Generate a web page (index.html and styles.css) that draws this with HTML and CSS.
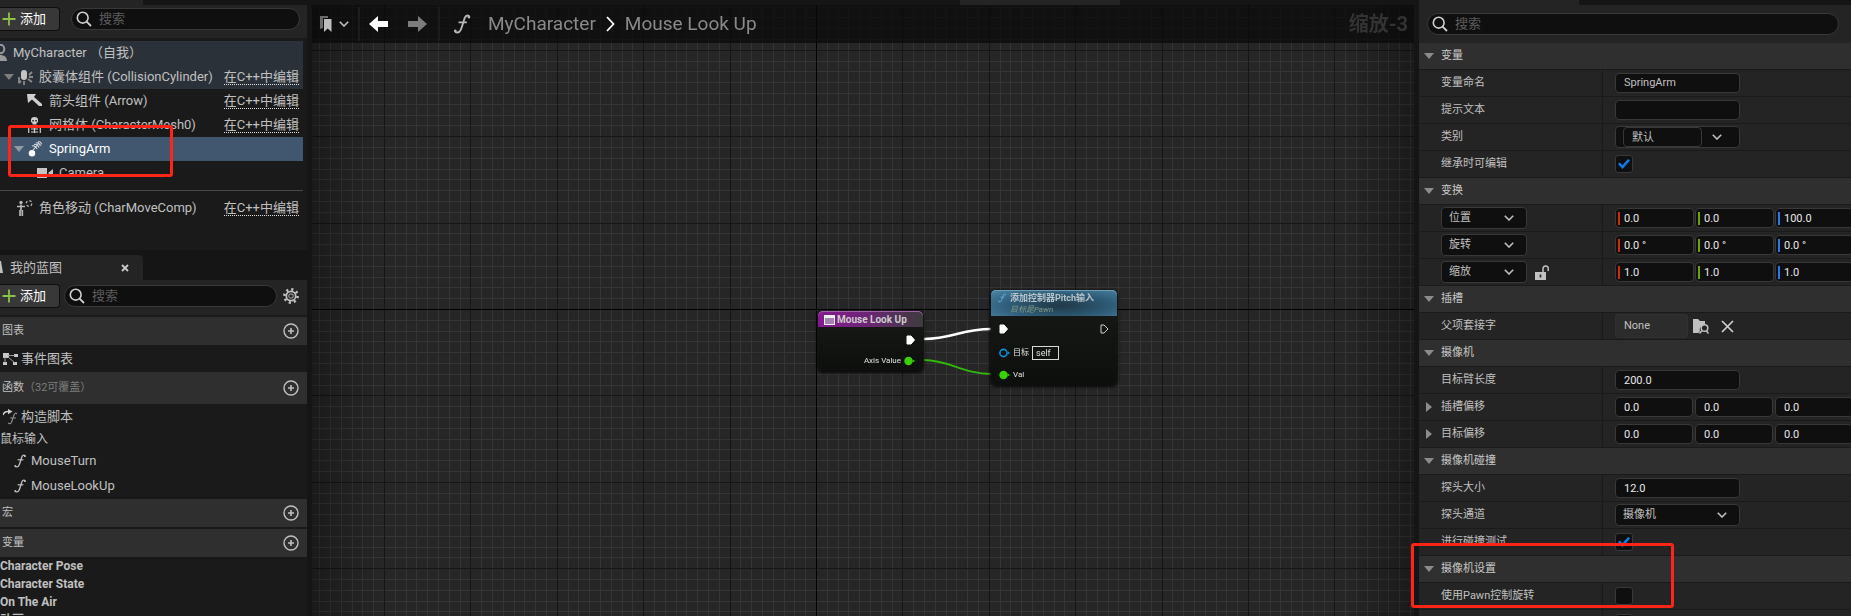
FILE: index.html
```html
<!DOCTYPE html>
<html lang="zh-CN">
<head>
<meta charset="utf-8">
<title>MyCharacter</title>
<link rel="stylesheet" href="styles.css">
</head>
<body>
<svg class="defs" width="0" height="0" aria-hidden="true">
  <symbol id="i-search" viewBox="0 0 16 16"><circle cx="6.7" cy="6.7" r="5.4" fill="none" stroke="currentColor" stroke-width="1.6"/><path d="M10.6 10.6 15 15" stroke="currentColor" stroke-width="1.8"/></symbol>
  <symbol id="i-plus" viewBox="0 0 14 14"><path d="M7 0.5v13M0.500 7h13" stroke="#8bc24a" stroke-width="1.8"/></symbol>
  <symbol id="i-add" viewBox="0 0 16 16"><circle cx="8" cy="8" r="7" fill="none" stroke="currentColor" stroke-width="1.4"/><path d="M8 5v6M5 8h6" stroke="currentColor" stroke-width="1.6"/></symbol>
  <symbol id="i-down" viewBox="0 0 10 6"><path d="M0 0h10L5 6z" fill="currentColor"/></symbol>
  <symbol id="i-right" viewBox="0 0 6 10"><path d="M0 0v10L6 5z" fill="currentColor"/></symbol>
  <symbol id="i-chev" viewBox="0 0 10 6"><path d="M.8.8 5 5 9.200.8" fill="none" stroke="currentColor" stroke-width="1.6"/></symbol>
  <symbol id="i-fn" viewBox="0 0 12 14"><path d="M11.300 2.300C11 .6 8.900.6 8 2.600 7 5 6.200 9 5 11.300 4 13.400 1.600 13.400.9 11.800" fill="none" stroke="currentColor" stroke-width="1.300"/><path d="M3.600 5.800h5.800" stroke="currentColor" stroke-width="1.200"/><circle cx="10.900" cy="2.200" r=".9" fill="currentColor"/><circle cx="1.300" cy="11.800" r=".9" fill="currentColor"/></symbol>
</svg>

<main class="editor">
  <aside class="left">
    <section class="components">
      <div class="strip"><span class="strip-tab"></span></div>
      <div class="toolbar">
        <button class="add"><svg width="14" height="14"><use href="#i-plus"/></svg>添加</button>
        <label class="search search-wide"><svg width="16" height="16"><use href="#i-search"/></svg><input type="text" placeholder="搜索" aria-label="搜索组件"></label>
      </div>
      <ul class="tree">
        <li class="trow root"><svg width="8" height="18" viewBox="0 0 8 18"><circle cx="0" cy="5" r="4.300" fill="none" stroke="#9a9a9a" stroke-width="2"/><path d="M0 11c4 0 7 2 7 6H0z" fill="#9a9a9a"/></svg><span>MyCharacter （自我）</span></li>
        <li class="trow lvl1 tinted"><svg class="dim" width="10" height="6"><use href="#i-down"/></svg>
          <svg width="16" height="16" viewBox="0 0 16 16"><rect x="3" y="1" width="6" height="10" rx="3" fill="#c4c4c4"/><path d="M1 8v4l-1.500 2M11 6l3-3M11 8h4M10 10l4 3M6 12v4M3 12l-2 2" stroke="#8a8a8a" stroke-width="1.800" fill="none"/></svg>
          <span>胶囊体组件 (CollisionCylinder)</span><a href="#">在C++中编辑</a></li>
        <li class="trow lvl2"><svg width="16" height="14" viewBox="0 0 16 14"><path d="M0 0h9L7 3l8 7v2l-3 0-7-6.500L1 9z" fill="#cfcfcf"/></svg><span>箭头组件 (Arrow)</span><a href="#">在C++中编辑</a></li>
        <li class="trow lvl2"><svg width="16" height="16" viewBox="0 0 16 16"><path d="M4 3Q4 0 7.500 0T11 3v2L9.500 6v1.500h-4V6L4 5z" fill="#cfcfcf"/><path d="M5.300 3h1.500v1.500H5.300zM8.300 3h1.500v1.500H8.300z" fill="#1a1a1a"/><path d="M2 9.500h11M4 12h7M4 15h7M7.500 8v8M1.700 9v7M13.300 9v7" stroke="#cfcfcf" stroke-width="1.200"/></svg><span>网格体 (CharacterMesh0)</span><a href="#">在C++中编辑</a></li>
        <li class="trow lvl1b selected"><svg class="dim" width="10" height="6"><use href="#i-down"/></svg>
          <svg width="16" height="16" viewBox="0 0 16 16"><circle cx="4" cy="12.300" r="3.200" fill="#fff"/><path d="M4 5q3-1 5 3M6 3.500q3-1 5 3M8 2q3-1 4.500 3M10 .8q3-.5 3.500 2.500M5 9l6-7" fill="none" stroke="#d8dde2" stroke-width="1.100"/></svg><span>SpringArm</span></li>
        <li class="trow lvl3"><svg width="16" height="10" viewBox="0 0 16 10"><path d="M0 0h10v10H0zM11 5l5-4v8z" fill="#c4c4c4"/></svg><span>Camera</span></li>
        <li class="tsep"></li>
        <li class="trow lvl1c"><svg width="16" height="16" viewBox="0 0 16 16"><circle cx="4" cy="2.500" r="1.700" fill="#b8b8b8"/><path d="M4 4.500v6M0 6.500h8M3 10v6M5.300 10v6" stroke="#b8b8b8" stroke-width="1.700"/><circle cx="12" cy="3.500" r="2.800" fill="none" stroke="#b8b8b8" stroke-width="1.300" stroke-dasharray="2.400 2"/></svg><span>角色移动 (CharMoveComp)</span><a href="#">在C++中编辑</a></li>
      </ul>
    </section>

    <section class="blueprint">
      <div class="tabs"><div class="tab"><svg width="4" height="14" viewBox="0 0 4 14"><path d="M0 0h1l2 12H0z" fill="#c0c0c0"/></svg><span>我的蓝图</span>
        <button class="close" aria-label="关闭"><svg width="8" height="8" viewBox="0 0 8 8"><path d="M1 1l6 6M7 1 1 7" stroke="#c8c8c8" stroke-width="1.900"/></svg></button></div></div>
      <div class="toolbar">
        <button class="add"><svg width="14" height="14"><use href="#i-plus"/></svg>添加</button>
        <label class="search search-near"><svg width="16" height="16"><use href="#i-search"/></svg><input type="text" placeholder="搜索" aria-label="搜索蓝图"></label>
        <button class="icon" aria-label="设置"><svg width="16" height="16" viewBox="0 0 16 16"><circle cx="8" cy="8" r="6.600" fill="none" stroke="#c0c0c0" stroke-width="2.600" stroke-dasharray="2.200 2.984"/><circle cx="8" cy="8" r="4.700" fill="none" stroke="#c0c0c0" stroke-width="1.700"/><circle cx="8" cy="8" r="2.200" fill="none" stroke="#909090" stroke-width="1.200"/></svg></button>
      </div>
      <div class="cat"><span>图表</span><button class="icon" aria-label="添加图表"><svg width="16" height="16"><use href="#i-add"/></svg></button></div>
      <div class="item"><svg width="15" height="14" viewBox="0 0 15 14"><path d="M0 1h6v5H0zM11 2h4v3h-4zM0 10h4v3H0zM10 10h4v3h-4z" fill="#c8c8c8"/><path d="M5 3.500h7M2 5v6M5 5l7 6" stroke="#a0a0a0" fill="none"/></svg><span>事件图表</span></div>
      <div class="cat cat-tall"><span>函数<em>（32可覆盖）</em></span><button class="icon" aria-label="添加函数"><svg width="16" height="16"><use href="#i-add"/></svg></button></div>
      <div class="item script"><svg width="15" height="16" viewBox="0 0 15 16"><path d="M0 6Q1 2 6 2.500" fill="none" stroke="#d0d0d0" stroke-width="1.600"/><path d="M5 0l4.500 2.500L5 5.200z" fill="#d0d0d0"/><path d="M14 5q-2-2-3 1l-2 6q-1 4-4 2M7 9h6" fill="none" stroke="#8a8a8a" stroke-width="1.200"/></svg><span>构造脚本</span></div>
      <div class="group">鼠标输入</div>
      <div class="item fn"><svg width="12" height="14"><use href="#i-fn"/></svg><span>MouseTurn</span></div>
      <div class="item fn"><svg width="12" height="14"><use href="#i-fn"/></svg><span>MouseLookUp</span></div>
      <div class="cat"><span>宏</span><button class="icon" aria-label="添加宏"><svg width="16" height="16"><use href="#i-add"/></svg></button></div>
      <div class="cat cat-next"><span>变量</span><button class="icon" aria-label="添加变量"><svg width="16" height="16"><use href="#i-add"/></svg></button></div>
      <div class="vars"><div>Character Pose</div><div>Character State</div><div>On The Air</div><div>动画</div></div>
    </section>
  </aside>

  <section class="graph">
    <div class="strip graph-strip"><span class="strip-mid"></span></div>
    <div class="canvas">
      <canvas class="grid"></canvas>
      <header class="crumbs">
        <button class="icon marks" aria-label="书签"><svg width="12" height="17" viewBox="0 0 12 17"><path d="M0 0h8v2H3v10l-3 1z" fill="#6c6c6c"/><path d="M4 3h7.500v13L7.700 12.500 4 16z" fill="#bdbdbd"/></svg><svg width="10" height="6"><use href="#i-chev"/></svg></button>
        <i class="bar"></i>
        <button class="icon" aria-label="后退"><svg width="20" height="16" viewBox="0 0 20 16"><path d="M0 8 9 0v5h10v6H9v5z" fill="#fff"/></svg></button>
        <button class="icon forward" aria-label="前进"><svg width="20" height="16" viewBox="0 0 20 16"><path d="M19 8 10 0v5H0v6h10v5z" fill="#7d7d7d"/></svg></button>
        <i class="bar bar-two"></i>
        <svg class="fn-big" width="18" height="20" viewBox="0 0 12 14"><use href="#i-fn"/></svg>
        <nav><a href="#">MyCharacter</a><svg width="9" height="16" viewBox="0 0 9 16"><path d="M1 1l6.500 7L1 15" fill="none" stroke="#fff" stroke-width="1.800"/></svg><a href="#">Mouse Look Up</a></nav>
        <span class="zoom">缩放-3</span>
      </header>
      <svg class="wires" width="700" height="500" viewBox="0 0 700 500"><path d="M603 334h9" stroke="#666" stroke-width="1.500"/><path d="M603 355h9" stroke="#266b12" stroke-width="1.500"/><path d="M612 334C640 334 650 324 679 324" fill="none" stroke="#fff" stroke-width="2.600"/><path d="M612 355C638 355 650 369 680 369" fill="none" stroke="#30b80c" stroke-width="1.800"/></svg>
      <article class="node event">
        <h3><svg width="11" height="10" viewBox="0 0 11 10"><path d="M0 0h11v10H0z" fill="#eee"/><path d="M1 3h9v6H1z" fill="#a583b0"/></svg>Mouse Look Up</h3>
        <div class="pin out"><svg width="9" height="10" viewBox="0 0 9 10"><path d="M1 1h4l3.500 4L5 9H1z" fill="#fff" stroke="#fff"/></svg></div>
        <div class="pin out value"><span>Axis Value</span><svg width="11" height="10" viewBox="0 0 11 10"><circle cx="4.500" cy="5" r="4.200" fill="#38d200"/><path d="M8.500 3.500 11 5 8.500 6.500z" fill="#38d200"/></svg></div>
      </article>
      <article class="node call">
        <h3><svg width="8" height="10" viewBox="0 0 12 14"><use href="#i-fn"/></svg><span>添加控制器Pitch输入<small>目标是Pawn</small></span></h3>
        <div class="pin"><svg width="9" height="10" viewBox="0 0 9 10"><path d="M1 1h4l3.500 4L5 9H1z" fill="#fff" stroke="#fff"/></svg><svg width="9" height="10" viewBox="0 0 9 10"><path d="M1 1h3l4 4-4 4H1z" fill="none" stroke="#d0d0d0"/></svg></div>
        <div class="pin"><svg width="11" height="10" viewBox="0 0 11 10"><circle cx="4.500" cy="5" r="3.600" fill="none" stroke="#0a8fd8" stroke-width="1.600"/><path d="M9 3.500 11 5 9 6.500z" fill="#0a8fd8"/></svg><label for="self">目标</label><input id="self" type="text" value="self"></div>
        <div class="pin"><svg width="11" height="10" viewBox="0 0 11 10"><circle cx="4.500" cy="5" r="4.200" fill="#38d200"/><path d="M8.500 3.500 11 5 8.500 6.500z" fill="#38d200"/></svg><span>Val</span></div>
      </article>
    </div>
  </section>

  <aside class="details">
    <div class="strip"><span class="strip-tab"></span></div>
    <div class="dsearch"><label class="search"><svg width="16" height="16"><use href="#i-search"/></svg><input type="text" placeholder="搜索" aria-label="搜索细节"></label></div>

    <h2><svg width="10" height="6"><use href="#i-down"/></svg>变量</h2>
    <div class="prop"><label for="vname">变量命名</label><div><input id="vname" class="field name" type="text" value="SpringArm"></div></div>
    <div class="prop"><label for="tip">提示文本</label><div><input id="tip" class="field" type="text"></div></div>
    <div class="prop"><label for="cate">类别</label><div><div class="combo"><input id="cate" type="text" value="默认"><button class="icon" aria-label="选择类别"><svg width="10" height="6"><use href="#i-chev"/></svg></button></div></div></div>
    <div class="prop"><label for="inst">继承时可编辑</label><div><input id="inst" type="checkbox" checked></div></div>

    <h2><svg width="10" height="6"><use href="#i-down"/></svg>变换</h2>
    <div class="prop"><div class="key"><span class="sel"><select aria-label="位置"><option>位置</option></select><svg width="10" height="6"><use href="#i-chev"/></svg></span></div><div class="vec"><input class="r" aria-label="X" value="0.0"><input class="g" aria-label="Y" value="0.0"><input class="b" aria-label="Z" value="100.0"></div></div>
    <div class="prop"><div class="key"><span class="sel"><select aria-label="旋转"><option>旋转</option></select><svg width="10" height="6"><use href="#i-chev"/></svg></span></div><div class="vec"><input class="r" aria-label="X" value="0.0 °"><input class="g" aria-label="Y" value="0.0 °"><input class="b" aria-label="Z" value="0.0 °"></div></div>
    <div class="prop"><div class="key"><span class="sel"><select aria-label="缩放"><option>缩放</option></select><svg width="10" height="6"><use href="#i-chev"/></svg></span><button class="icon" aria-label="锁定比例"><svg width="14" height="15" viewBox="0 0 14 15"><path d="M0 7h11v8H0z" fill="#c0c0c0"/><path d="M8 7V4q0-3 2.700-3T13.200 4v2" fill="none" stroke="#c0c0c0" stroke-width="1.500"/><path d="M4.700 9.500h1.600v3H4.700z" fill="#222"/></svg></button></div><div class="vec"><input class="r" aria-label="X" value="1.0"><input class="g" aria-label="Y" value="1.0"><input class="b" aria-label="Z" value="1.0"></div></div>

    <h2><svg width="10" height="6"><use href="#i-down"/></svg>插槽</h2>
    <div class="prop"><label for="sock">父项套接字</label><div><input id="sock" class="socket" type="text" value="None" readonly>
      <button class="icon browse" aria-label="浏览"><svg width="17" height="15" viewBox="0 0 17 15"><path d="M0 0h5l2 2h5v3.500a5 5 0 0 0-5 6.500l-1.500 2H0z" fill="#c0c0c0"/><circle cx="11.500" cy="9" r="3.300" fill="none" stroke="#c0c0c0" stroke-width="1.500"/><path d="M9 11.500 6.500 14.500M13.500 12l2 2.500" stroke="#c0c0c0" stroke-width="1.500"/></svg></button>
      <button class="icon clear" aria-label="清除"><svg width="13" height="13" viewBox="0 0 13 13"><path d="M1 1l11 11M12 1 1 12" stroke="#cfcfcf" stroke-width="1.700"/></svg></button></div></div>

    <h2><svg width="10" height="6"><use href="#i-down"/></svg>摄像机</h2>
    <div class="prop"><label for="arm">目标臂长度</label><div><input id="arm" class="field" type="text" value="200.0"></div></div>
    <div class="prop"><div class="key fold"><svg width="6" height="10"><use href="#i-right"/></svg>插槽偏移</div><div class="vec plain"><input aria-label="X" value="0.0"><input aria-label="Y" value="0.0"><input aria-label="Z" value="0.0"></div></div>
    <div class="prop"><div class="key fold"><svg width="6" height="10"><use href="#i-right"/></svg>目标偏移</div><div class="vec plain"><input aria-label="X" value="0.0"><input aria-label="Y" value="0.0"><input aria-label="Z" value="0.0"></div></div>

    <h2><svg width="10" height="6"><use href="#i-down"/></svg>摄像机碰撞</h2>
    <div class="prop"><label for="probe">探头大小</label><div><input id="probe" class="field" type="text" value="12.0"></div></div>
    <div class="prop"><label for="chan">探头通道</label><div><span class="sel sel-wide"><select id="chan"><option>摄像机</option></select><svg width="10" height="6"><use href="#i-chev"/></svg></span></div></div>
    <div class="prop"><label for="test">进行碰撞测试</label><div><input id="test" type="checkbox" checked></div></div>

    <h2><svg width="10" height="6"><use href="#i-down"/></svg>摄像机设置</h2>
    <div class="prop"><label for="pawn">使用Pawn控制旋转</label><div><input id="pawn" type="checkbox"></div></div>
    <div class="prop"><label></label><div><input type="checkbox" aria-label="继承Pitch"></div></div>
  </aside>
</main>
<div class="callout callout-spring"></div>
<div class="callout callout-camera"></div>
<script src="grid.js"></script>
</body>
</html>
```

FILE: styles.css
```css
* { box-sizing: border-box; }
body { margin: 0; background: #151515; color: #c0c0c0; font: 13px/16px Roboto, "Noto Sans CJK SC", sans-serif; overflow: hidden; }
button, input, select { font: inherit; color: inherit; margin: 0; padding: 0; border: 0; background: none; appearance: none; outline: 0; }
ul { list-style: none; margin: 0; padding: 0; }
svg { display: block; flex: none; }
.defs { position: absolute; }
.icon { display: flex; align-items: center; color: #c0c0c0; }
.editor { display: grid; grid-template-columns: 307px 1fr 432px; gap: 5px; height: 100vh; }
.left, .graph, .details { min-width: 0; overflow: hidden; }
.strip { height: 5px; background: #151515; display: flex; }
.strip-tab { width: 143px; background: #242424; }

/* left column */
.left { background: #1a1a1a; display: flex; flex-direction: column; }
.components { height: 250px; flex: none; }
.blueprint { flex: none; }
.toolbar { display: flex; align-items: center; height: 35px; background: #242424; border-bottom: 2px solid #1a1a1a; padding: 0 7px 5px 0; }
.add { display: flex; align-items: center; gap: 4px; width: 60px; height: 24px; padding-left: 2px; background: #383838; border: 1px solid #0f0f0f; border-left: 0; border-radius: 0 4px 4px 0; color: #fff; }
.search { display: flex; align-items: center; gap: 7px; height: 22px; flex: 1; padding-left: 4px; border: 1px solid #383838; border-radius: 11px; background: #0f0f0f; color: #d0d0d0; }
.search input { width: 100%; min-width: 0; }
.search input::placeholder { color: #5c5c5c; opacity: 1; }
.search-wide { margin-left: 11px; }
.search-near { margin: 0 6px 0 4px; }
.tree { padding-top: 1px; margin-right: 4px; }
.trow { display: flex; align-items: center; height: 24px; white-space: nowrap; }
.trow a { margin-left: auto; margin-right: 4px; color: inherit; text-decoration: none; line-height: 15px; border-bottom: 1px dotted #e0e0e0; }
.root, .tinted { background: #2b3139; }
.root span { margin-left: 5px; }
.dim { color: #7d7d7d; }
.selected .dim { color: #8f9aa5; }
.lvl1 { padding-left: 4px; gap: 4px; }
.lvl1 span { margin-left: 1px; }
.lvl2 { padding-left: 27px; gap: 6px; }
.lvl1b { padding-left: 14px; gap: 4px; }
.lvl1b span { margin-left: 1px; }
.lvl3 { padding-left: 37px; gap: 6px; }
.lvl1c { padding-left: 17px; gap: 6px; }
.selected { background: #40576f; color: #fff; }
.tsep { height: 1px; margin: 5px 0; background: #4a4a4a; }
.tabs { height: 30px; padding-top: 5px; background: #151515; }
.tab { display: flex; align-items: center; width: 143px; height: 25px; background: #242424; border-radius: 0 4px 0 0; }
.tab span { margin-left: 6px; }
.close { margin-left: auto; margin-right: 14px; }
.blueprint .toolbar { height: 37px; padding: 0 8px 3px 0; }
.cat { display: flex; align-items: center; justify-content: space-between; height: 28px; padding: 0 8px 0 2px; background: #2f2f2f; font-size: 11px; }
.cat-tall { height: 32px; }
.cat-next { margin-top: 2px; }
.cat em { font-style: normal; color: #7c7c7c; }
.item { display: flex; align-items: center; gap: 3px; height: 27px; padding-left: 3px; }
.script { height: 26px; }
.group { height: 18px; line-height: 18px; font-size: 12px; }
.fn { height: 25px; padding-left: 14px; gap: 5px; }
.script + .group + .fn + .fn { margin-bottom: 1px; }
.vars { font-weight: 700; font-size: 12px; line-height: 18px; height: 72px; }

/* graph */
.graph { display: flex; flex-direction: column; }
.graph-strip { justify-content: center; }
.strip-mid { width: 160px; margin-left: 354px; background: #242424; }
.canvas { position: relative; flex: 1; background: #262626; overflow: hidden; }
.grid { position: absolute; inset: 0; width: 100%; height: 100%; }
.crumbs { position: relative; display: flex; align-items: center; height: 38px; padding: 0 6px 0 8px; background: rgba(8, 8, 8, .72); color: #8a8a8a; font-size: 19px; line-height: 24px; }
.marks { gap: 7px; width: 38px; }
.bar { width: 2px; height: 34px; background: #1c1c1c; margin-right: 9px; }
.forward { margin-left: 19px; }
.bar-two { margin-left: 10px; margin-right: 13px; }
.fn-big { color: #b8b8b8; }
.crumbs nav { display: flex; align-items: center; gap: 10px; margin-left: 17px; }
.crumbs a { color: inherit; text-decoration: none; }
.zoom { margin-left: auto; font-size: 20px; font-weight: 700; color: #333; }
.wires { position: absolute; left: 0; top: 0; }
.node { position: absolute; border-radius: 5px; background: linear-gradient(#171a17, #0c0f0c); box-shadow: 0 1px 3px 1px #0a0a0a; color: #e0e0e0; font-size: 8px; line-height: 10px; }
.node h3 { margin: 0; display: flex; gap: 3px; border-radius: 5px 5px 0 0; font-weight: 700; line-height: 11px; color: #ccc; }
.event { left: 506px; top: 306px; width: 105px; height: 60px; }
.event h3 { height: 16px; align-items: center; padding: 1px 0 0 6px; font-size: 10px; gap: 2px; background: linear-gradient(90deg, #85198f, #6e2478 45%, #3c3c3c); box-shadow: inset 0 1px #a060a8; }
.call { left: 679px; top: 285px; width: 126px; height: 95px; }
.call h3 { height: 26px; padding: 3px 0 0 7px; font-size: 9px; gap: 4px; background: radial-gradient(ellipse at 55% 60%, #203845, #2d5a75 50%, #4d86a8); box-shadow: inset 0 1px #6e9db8; color: #b8c4cc; }
.call h3 svg { color: #5fb4e8; }
.call small { display: block; font-size: 8px; font-style: italic; font-weight: 400; color: #7f9683; }
.pin { display: flex; align-items: center; }
.out { justify-content: flex-end; padding: 8px 8px 0 0; }
.value { padding: 11px 8px 0 0; gap: 3px; }
.call .pin { height: 22px; padding: 0 8px; }
.call .pin:nth-of-type(1) { justify-content: space-between; height: 26px; }
.call .pin span, .call .pin label { margin-left: 3px; }
.call .pin input { width: 27px; height: 14px; margin-left: 3px; padding-left: 3px; border: 1px solid #d8d8d8; font-size: 9px; }

/* details */
.details { background: #242424; font-size: 11px; }
.details .strip-tab { width: 160px; }
.dsearch { display: flex; height: 38px; padding: 8px 12px 0 8px; font-size: 13px; }
.details h2 { display: flex; align-items: center; gap: 7px; margin: 0; height: 27px; padding-left: 5px; background: #2f2f2f; border-bottom: 1px solid #1a1a1a; font-size: 11px; font-weight: 400; color: #c8c8c8; }
.details h2 svg { color: #8c8c8c; }
.prop { display: grid; grid-template-columns: 184px 1fr; height: 27px; border-bottom: 1px solid #1a1a1a; }
.prop > * { display: flex; align-items: center; min-width: 0; padding-left: 12px; }
.prop > :first-child { padding-left: 22px; border-right: 1px solid #1a1a1a; }
.prop > .fold { padding-left: 7px; gap: 9px; }
.fold svg { color: #8c8c8c; }
.field { width: 125px; height: 20px; padding-left: 8px; border: 1px solid #383838; border-radius: 4px; background: #0f0f0f; color: #e8e8e8; }
.details .name { padding-bottom: 2px; color: #c0c0c0; }
.combo { display: flex; width: 125px; height: 22px; padding-left: 7px; border: 1px solid #383838; border-radius: 4px; background: #0f0f0f; }
.combo input { width: 79px; height: 20px; padding: 0 0 2px 8px; border: 1px solid #383838; border-radius: 4px; }
.combo .icon { margin-left: 10px; }
input[type="checkbox"] { width: 18px; height: 18px; border: 1px solid #383838; border-radius: 3px; background: #0f0f0f; display: grid; place-items: center; }
input[type="checkbox"]:checked::before { content: ""; width: 12px; height: 10px; background: #0f7bea; clip-path: polygon(0 50%, 15% 35%, 36% 62%, 84% 0, 100% 15%, 38% 100%); }
.sel { display: flex; align-items: center; position: relative; width: 86px; height: 22px; }
.sel select { width: 100%; height: 100%; padding-left: 7px; border: 1px solid #383838; border-radius: 4px; background: #0f0f0f; }
.sel svg { position: absolute; right: 13px; pointer-events: none; }
.sel-wide { width: 125px; }
.key .icon { margin-left: 8px; }
.vec { gap: 1px; overflow: hidden; }
.vec input { flex: none; width: 79px; height: 20px; padding-left: 8px; border: 1px solid #383838; border-radius: 4px; background: #0f0f0f; color: #e8e8e8; }
.plain { gap: 2px; }
.plain input { width: 78px; }
.r { --axis: #d02a08; }
.g { --axis: #6ba500; }
.b { --axis: #2a78e8; }
.vec .r, .vec .g, .vec .b { background: linear-gradient(var(--axis), var(--axis)) 2px center / 2px 13px no-repeat #0f0f0f; }
.socket { width: 73px; height: 24px; padding: 0 0 2px 8px; border: 1px solid #303030; border-radius: 3px; background: #2c2c2c; }
.browse { margin-left: 5px; }
.clear { margin-left: 11px; }

/* highlight frames */
.callout { position: absolute; border: 3px solid #ff2418; border-radius: 3px; pointer-events: none; }
.callout-spring { left: 8px; top: 125px; width: 165px; height: 52px; }
.callout-camera { left: 1411px; top: 543px; width: 263px; height: 65px; }
```

FILE: grid.js
```js
const canvas = document.querySelector(".grid");
const ORIGIN = { x: 504, y: 304 };
const CELL = 10.8;

function draw() {
  const w = canvas.width = canvas.clientWidth;
  const h = canvas.height = canvas.clientHeight;
  const g = canvas.getContext("2d");
  const pass = (color, test) => {
    g.fillStyle = color;
    for (let i = -Math.ceil(ORIGIN.x / CELL); ORIGIN.x + i * CELL < w; i++)
      if (test(i)) g.fillRect(Math.round(ORIGIN.x + i * CELL), 0, 1, h);
    for (let i = -Math.ceil(ORIGIN.y / CELL); ORIGIN.y + i * CELL < h; i++)
      if (test(i)) g.fillRect(0, Math.round(ORIGIN.y + i * CELL), w, 1);
  };
  pass("#353535", i => i % 8 !== 0);
  pass("#161616", i => i % 8 === 0);
  pass("#000", i => i === 0);

  const shade = g.createLinearGradient(0, 0, w, 0);
  shade.addColorStop(0, "rgba(0,0,0,.3)");
  shade.addColorStop(.06, "rgba(0,0,0,0)");
  shade.addColorStop(.94, "rgba(0,0,0,0)");
  shade.addColorStop(1, "rgba(0,0,0,.3)");
  g.fillStyle = shade;
  g.fillRect(0, 0, w, h);
}

draw();
window.addEventListener("resize", draw);
```
